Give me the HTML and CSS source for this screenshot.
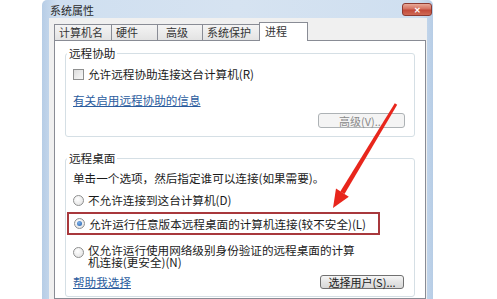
FILE: index.html
```html
<!DOCTYPE html>
<html lang="zh-CN">
<head>
  <meta charset="UTF-8">
  <title>系统属性</title>
  <link rel="stylesheet" href="styles.css">
</head>
<body>
  <div class="window">
    <div class="titlebar">
      <span class="title">系统属性</span>
      <span class="close">✕</span>
    </div>
    <div class="dialog">
      <div class="tabs">
        <div class="tab tab-name">计算机名</div>
        <div class="tab tab-hw">硬件</div>
        <div class="tab tab-adv">高级</div>
        <div class="tab tab-prot">系统保护</div>
        <div class="tab active">进程</div>
      </div>
      <div class="panel">
        <div class="group group-assist">
          <div class="group-title">远程协助</div>
          <div class="row check-row">
            <span class="checkbox"></span>
            <span>允许远程协助连接这台计算机(R)</span>
          </div>
          <div class="link link-info">有关启用远程协助的信息</div>
          <div class="btn-row">
            <button class="btn disabled btn-adv">高级(V)...</button>
          </div>
        </div>

        <div class="group group-desktop">
          <div class="group-title">远程桌面</div>
          <div class="hint">单击一个选项，然后指定谁可以连接(如果需要)。</div>
          <div class="row radio-row first">
            <span class="radio"></span>
            <span>不允许连接到这台计算机(D)</span>
          </div>
          <div class="row radio-row highlight">
            <span class="radio checked"></span>
            <span>允许运行任意版本远程桌面的计算机连接(较不安全)(L)</span>
          </div>
          <div class="row radio-row multi">
            <span class="radio"></span>
            <span class="wrap">仅允许运行使用网络级别身份验证的远程桌面的计算机连接(更安全)(N)</span>
          </div>
          <div class="foot-row">
            <span class="link">帮助我选择</span>
            <button class="btn btn-users">选择用户(S)...</button>
          </div>
        </div>
      </div>
    </div>
  </div>

  <svg class="arrow" width="497" height="299" viewBox="0 0 497 299">
    <polygon points="397.2,104.7 394.8,103.3 340.3,191.4 344.5,194" fill="#e8261c"/>
    <polygon points="333,208 348.8,196.8 336,188.6" fill="#e8261c"/>
  </svg>
</body>
</html>
```

FILE: styles.css
```css
body {
  margin: 0;
  width: 497px;
  height: 299px;
  overflow: hidden;
  background: #fff;
  font-family: "Noto Sans CJK SC", "Noto Sans", sans-serif;
  font-size: 11.6px;
  color: #1a1a1a;
  position: relative;
}

.window {
  margin-left: 42px;
  width: 391px;
  height: 299px;
  display: flex;
  flex-direction: column;
  background: linear-gradient(90deg, #b7cde6, #cfdff0 4%, #d6e3f1 50%, #cfdff0 96%, #b7cde6);
  border-radius: 5px 5px 0 0;
}

.titlebar {
  height: 18px;
  display: flex;
  justify-content: space-between;
  align-items: center;
  padding: 0 1px 0 8px;
}

.title {
  font-size: 11px;
  color: #2a2a2a;
  line-height: 14px;
  margin-top: 1px;
}

.close {
  width: 28px;
  height: 11px;
  margin-top: 1px;
  border: 1px solid #8c3a31;
  border-radius: 3px;
  background: linear-gradient(#e9a998, #d3705f 45%, #c24a3a 55%, #cf6a55);
  color: #fff;
  font-size: 8px;
  line-height: 11px;
  text-align: center;
  font-weight: bold;
}

.dialog {
  flex: 1;
  margin: 0 6px 0 7px;
  padding: 4px 1px 0 5px;
  background: #f0f0f0;
  display: flex;
  flex-direction: column;
}

.tabs {
  height: 18px;
  display: flex;
  align-items: flex-end;
}

.tab {
  box-sizing: border-box;
  height: 16px;
  border: 1px solid #898c95;
  border-bottom: none;
  border-right: none;
  background: linear-gradient(#f4f4f4, #e3e3e3);
  font-size: 11px;
  line-height: 15px;
  padding-left: 4px;
  color: #333;
}

.tab-name { width: 57px; }
.tab-hw { width: 46px; }
.tab-adv { width: 45px; padding-left: 8px; }
.tab-prot { width: 57px; }

.tab.active {
  width: 49px;
  height: 19px;
  margin-bottom: -1px;
  border-right: 1px solid #898c95;
  background: #fff;
  position: relative;
  z-index: 1;
  padding-left: 5px;
  line-height: 17px;
}

.panel {
  flex: 1;
  border: 1px solid #898c95;
  background: #fff;
  padding: 12px 10px 0 10px;
}

.group {
  border: 1px solid #d5dfe5;
  border-radius: 3px;
  padding: 0 9px 0 7px;
}

.group-title {
  width: fit-content;
  margin: -8px 0 0 -6px;
  padding: 0 2px;
  background: #fff;
  line-height: 14px;
}

.row {
  display: flex;
  align-items: center;
  height: 16px;
}

.check-row { margin-top: 6px; }

.checkbox {
  box-sizing: border-box;
  width: 11px;
  height: 11px;
  border: 1px solid #8e8f8f;
  background: linear-gradient(135deg, #dcdcdc, #f8f8f8);
  margin-right: 4px;
}

.link {
  color: #2b5c9e;
  text-decoration: underline;
  line-height: 16px;
}

.link-info {
  margin-top: 10px;
  width: fit-content;
}

.btn-row {
  display: flex;
  justify-content: flex-end;
  margin-top: 5px;
  padding-bottom: 8px;
}

.btn {
  box-sizing: border-box;
  height: 15px;
  padding: 0;
  border: 1px solid #707070;
  border-radius: 3px;
  background: linear-gradient(#f6f6f6, #e4e4e4 50%, #d8d8d8);
  font-family: inherit;
  font-size: 11px;
  line-height: 12px;
  color: #222;
}

.btn.disabled {
  border-color: #adb2b5;
  background: #f4f4f4;
  color: #8a8a8a;
}

.btn-adv { width: 87px; }
.btn-users { width: 84px; height: 14px; margin-right: 1px; }

.group-desktop {
  margin-top: 21px;
}

.hint {
  margin-top: 5px;
  line-height: 16px;
}

.radio {
  box-sizing: border-box;
  flex: none;
  width: 11px;
  height: 11px;
  border-radius: 50%;
  border: 1px solid #8e8f8f;
  background: radial-gradient(circle at 40% 35%, #fff, #dedede);
  margin-right: 4px;
  position: relative;
}

.radio.checked::after {
  content: "";
  position: absolute;
  left: 2px;
  top: 2px;
  width: 5px;
  height: 5px;
  border-radius: 50%;
  background: radial-gradient(circle at 40% 35%, #7fb2ea, #1d5ba8);
}

.radio-row.first { margin-top: 6px; }

.radio-row.highlight {
  box-sizing: border-box;
  height: 23px;
  width: 313px;
  margin: 4px 0 0 -6px;
  padding: 0 0 0 5px;
  border: 2px solid #a8383c;
}

.radio-row.multi {
  height: auto;
  align-items: flex-start;
  margin-top: 9px;
}

.radio-row.multi .radio { margin-top: 3px; }

.wrap {
  width: 272px;
  line-height: 12px;
}

.foot-row {
  display: flex;
  justify-content: space-between;
  align-items: center;
  margin-top: 6px;
  padding-bottom: 6px;
}

.arrow {
  position: absolute;
  left: 0;
  top: 0;
  pointer-events: none;
}
```
